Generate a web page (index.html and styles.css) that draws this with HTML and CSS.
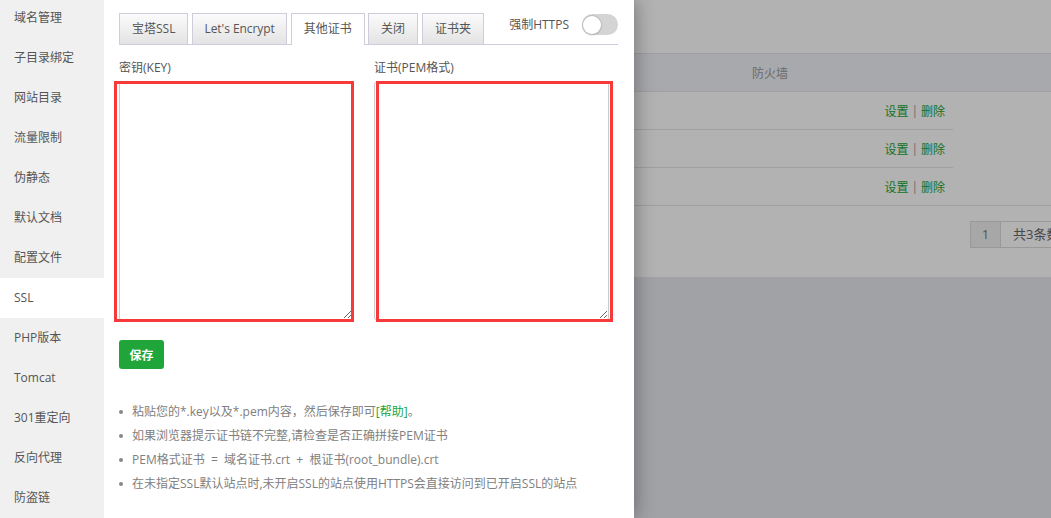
FILE: index.html
```html
<!DOCTYPE html>
<html lang="zh-CN">
<head>
<meta charset="utf-8">
<title>SSL</title>
<link rel="stylesheet" href="styles.css">
</head>
<body>
<div class="screen">
  <div class="page">
    <div class="page-top"></div>
    <div class="thead"><span class="th">防火墙</span></div>
    <div class="trow"><div class="trow-in"><span class="ops"><a class="op">设置</a><span class="sep">|</span><a class="op">删除</a></span></div></div>
    <div class="trow"><div class="trow-in"><span class="ops"><a class="op">设置</a><span class="sep">|</span><a class="op">删除</a></span></div></div>
    <div class="trow trow-last"><div class="trow-in"><span class="ops"><a class="op">设置</a><span class="sep">|</span><a class="op">删除</a></span></div></div>
    <div class="pager-area">
      <div class="pager"><span class="pg-cur">1</span><span class="pg-total">共3条数据</span></div>
    </div>
    <div class="page-bottom"></div>
  </div>
  <div class="shade"></div>
  <div class="popup">
    <nav class="side">
      <div class="side-item">域名管理</div>
      <div class="side-item">子目录绑定</div>
      <div class="side-item">网站目录</div>
      <div class="side-item">流量限制</div>
      <div class="side-item">伪静态</div>
      <div class="side-item">默认文档</div>
      <div class="side-item">配置文件</div>
      <div class="side-item active">SSL</div>
      <div class="side-item">PHP版本</div>
      <div class="side-item">Tomcat</div>
      <div class="side-item">301重定向</div>
      <div class="side-item">反向代理</div>
      <div class="side-item">防盗链</div>
    </nav>
    <main class="panel">
      <div class="tabs">
        <span class="tab">宝塔SSL</span>
        <span class="tab tab-le">Let's Encrypt</span>
        <span class="tab tab-on">其他证书</span>
        <span class="tab">关闭</span>
        <span class="tab">证书夹</span>
        <span class="force">强制HTTPS</span>
        <span class="toggle"><span class="knob"></span></span>
      </div>
      <div class="fields">
        <div class="field">
          <label class="lbl">密钥(KEY)</label>
          <div class="ta-wrap mark-left"><textarea class="ta ta-key"></textarea></div>
        </div>
        <div class="field">
          <label class="lbl">证书(PEM格式)</label>
          <div class="ta-wrap mark-right"><textarea class="ta ta-pem"></textarea></div>
        </div>
      </div>
      <button class="btn-save">保存</button>
      <ul class="notes">
        <li class="note">粘贴您的*.key以及*.pem内容，然后保存即可<a class="help">[帮助]</a>。</li>
        <li class="note">如果浏览器提示证书链不完整,请检查是否正确拼接PEM证书</li>
        <li class="note">PEM格式证书 &nbsp;= &nbsp;域名证书.crt &nbsp;+ &nbsp;根证书(root_bundle).crt</li>
        <li class="note">在未指定SSL默认站点时,未开启SSL的站点使用HTTPS会直接访问到已开启SSL的站点</li>
      </ul>
    </main>
  </div>
</div>
</body>
</html>
```

FILE: styles.css
```css
* { box-sizing: border-box; }
html, body { margin: 0; padding: 0; }
body {
  font-family: "Open Sans", "Noto Sans CJK SC", sans-serif;
  font-size: 12px;
  color: #555;
  overflow: hidden;
}
.screen {
  position: relative;
  width: 1051px;
  height: 518px;
  overflow: hidden;
}

/* underlying page */
.page {
  width: 1051px;
  height: 518px;
  background: #fff;
  display: flex;
  flex-direction: column;
}
.page-top { height: 54px; border-bottom: 1px solid #e4e4e4; flex: none; }
.thead {
  height: 38px; flex: none;
  background: #f1f3f7;
  border-bottom: 1px solid #e4e4e4;
  display: flex; align-items: center;
  padding-left: 752px;
  color: #9a9a9a;
}
.trow { height: 38px; flex: none; }
.trow-in {
  width: 953px; height: 38px;
  border-bottom: 1px solid #e4e4e4;
  display: flex; align-items: center; justify-content: flex-end;
  padding-right: 8px;
}
.trow-last { border-bottom: 1px solid #e4e4e4; }
.trow-last .trow-in { border-bottom: none; height: 37px; }
.ops { display: flex; align-items: center; }
.op { color: #20a53a; }
.sep { color: #999; margin: 0 3px; }
.pager-area { height: 71px; flex: none; padding: 15px 0 0 970px; overflow: hidden; }
.pager {
  display: flex;
  width: max-content;
  height: 27px;
  border: 1px solid #dcdcdc;
}
.pg-cur {
  flex: none;
  width: 30px; text-align: center; line-height: 25px;
  background: #f0f0f0; border-right: 1px solid #dcdcdc; color: #777;
  font-size: 13px;
}
.pg-total { flex: none; padding: 0 12px; line-height: 25px; color: #666; font-size: 13px; white-space: nowrap; }
.page-bottom { flex: 1; background: #e7e8ee; }

.shade {
  position: absolute; inset: 0;
  background: rgba(0, 0, 0, 0.3);
}

/* popup */
.popup {
  position: absolute; left: 0; top: 0;
  width: 634px; height: 518px;
  display: flex;
  background: #fff;
  box-shadow: 2px 0 18px rgba(0, 0, 0, 0.32);
}
.side {
  width: 104px; flex: none;
  background: #f0f0f0;
  margin-top: -2px;
  height: 520px;
}
.side-item {
  height: 40px; line-height: 40px;
  padding-left: 14px;
  color: #555;
}
.side-item.active { background: #fff; }

.panel {
  flex: 1;
  padding: 13px 16px 0 15px;
}
.tabs {
  display: flex; align-items: flex-start;
  height: 32px;
  border-bottom: 1px solid #cfcddc;
}
.tab {
  height: 31px; line-height: 29px;
  padding: 0 12px;
  margin-right: 4px;
  border: 1px solid #cfcddc;
  border-bottom: none;
  background: linear-gradient(#fbfbfb, #e3e3e3);
  color: #555;
  white-space: nowrap;
}
.tab-le { padding: 0 11px; letter-spacing: -0.05px; }
.tab-on {
  background: #fff;
  height: 32px;
  padding: 0 12px;
  margin-right: 3px;
}
.force {
  margin-left: auto;
  margin-top: 3px;
  line-height: 18px;
  color: #555;
}
.toggle {
  width: 36px; height: 21px;
  margin: 1px 0 0 13px;
  border-radius: 11px;
  background: #d4d4d4;
  display: flex; align-items: center;
  padding-left: 1px;
}
.knob {
  width: 18px; height: 18px;
  border-radius: 50%;
  background: #fff;
  box-shadow: 0 0 0 1px #bdbdbd, 0 1px 2px rgba(0,0,0,0.25);
}

.fields { display: flex; gap: 21px; margin-top: 13px; }
.field { display: flex; flex-direction: column; }
.lbl { display: block; height: 20px; line-height: 20px; margin-bottom: 4px; color: #555; }
.ta-wrap { position: relative; }
.ta {
  display: block;
  height: 238px;
  border: 1px solid #ccc;
  border-radius: 2px;
  margin: 0;
  padding: 4px;
  font: inherit;
  background: #fff;
}
.ta-key { width: 234px; }
.ta-pem { width: 235px; }
.ta-wrap::after {
  content: "";
  position: absolute;
  border: 3px solid #f73939;
  pointer-events: none;
}
.mark-left::after { left: -5px; right: -1px; top: -1px; bottom: -2px; }
.mark-right::after { left: 2px; right: -4px; top: -1px; bottom: -2px; }

.btn-save {
  display: block;
  margin-top: 20px;
  width: 45px; height: 29px;
  border: none; border-radius: 3px;
  background: #20a53a;
  color: #fff;
  font: inherit;
  font-weight: bold;
  padding: 0;
}
.notes { list-style: none; margin: 31px 0 0; padding: 0; }
.note {
  display: flex; align-items: center;
  height: 24px; line-height: 24px;
  color: #808080;
  white-space: pre;
}
.note::before {
  content: "";
  width: 4px; height: 4px; border-radius: 50%;
  background: #888;
  margin: 0 9px 0 0;
  flex: none;
}
.help { color: #20a53a; }
```
